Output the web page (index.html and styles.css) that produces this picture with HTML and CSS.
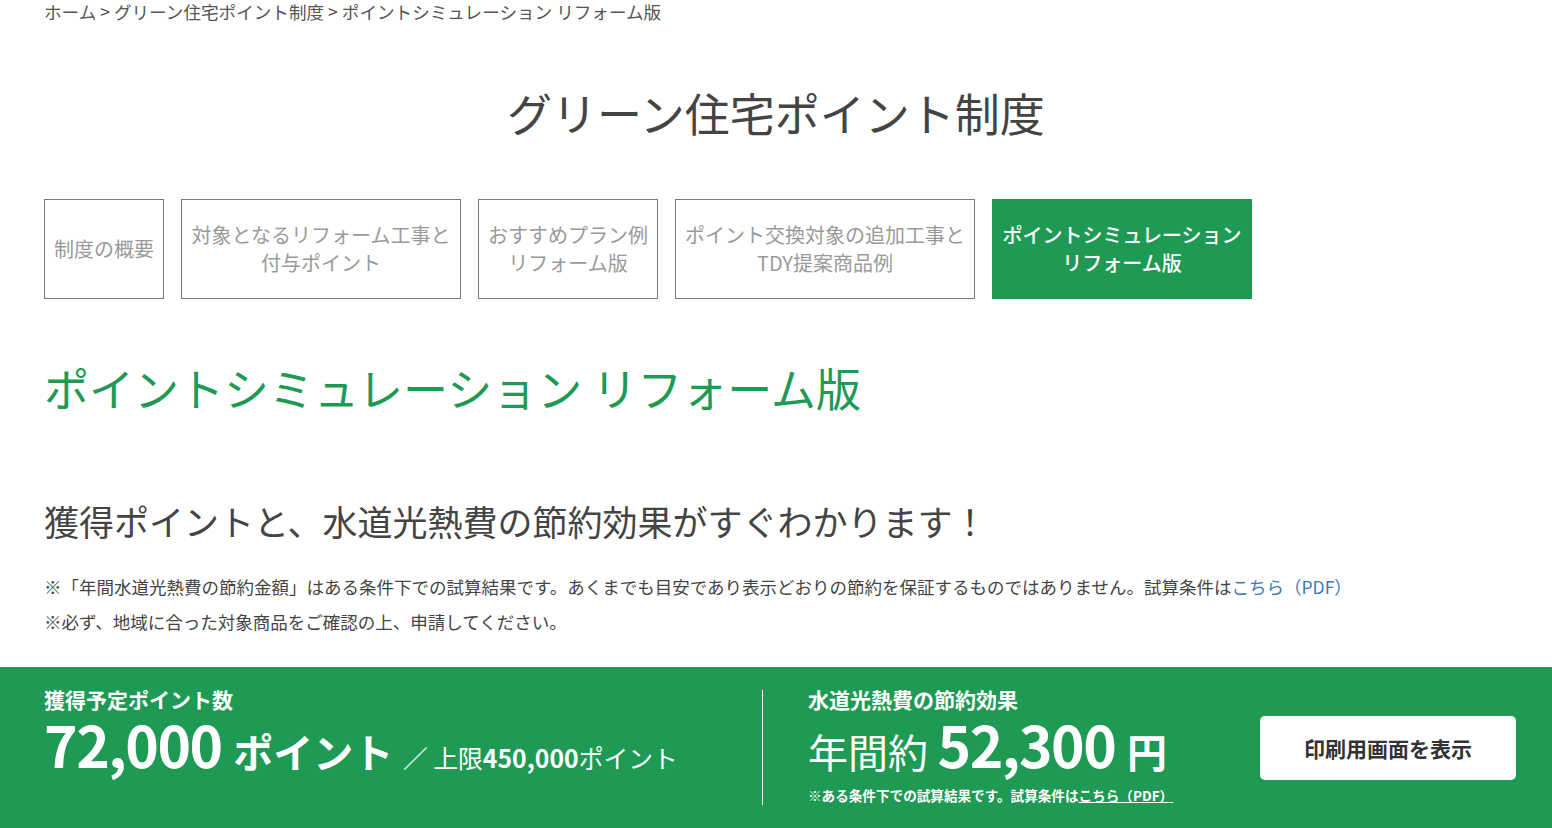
FILE: index.html
```html
<!DOCTYPE html>
<html lang="ja">
<head>
<meta charset="utf-8">
<title>ポイントシミュレーション リフォーム版</title>
<link rel="stylesheet" href="styles.css">
</head>
<body>
<div class="page">
  <nav class="breadcrumb">ホーム &gt; グリーン住宅ポイント制度 &gt; ポイントシミュレーション リフォーム版</nav>
  <h1 class="site-title">グリーン住宅ポイント制度</h1>
  <ul class="tabs">
    <li class="tab w1">制度の概要</li>
    <li class="tab w2">対象となるリフォーム工事と<br>付与ポイント</li>
    <li class="tab w3">おすすめプラン例<br>リフォーム版</li>
    <li class="tab w4">ポイント交換対象の追加工事と<br>TDY提案商品例</li>
    <li class="tab w5 active">ポイントシミュレーション<br>リフォーム版</li>
  </ul>
  <h2 class="page-title">ポイントシミュレーション リフォーム版</h2>
  <p class="lead">獲得ポイントと、水道光熱費の節約効果がすぐわかります！</p>
  <div class="notes">
    <p>※「年間水道光熱費の節約金額」はある条件下での試算結果です。あくまでも目安であり表示どおりの節約を保証するものではありません。試算条件は<a href="#" class="link">こちら（PDF）</a></p>
    <p>※必ず、地域に合った対象商品をご確認の上、申請してください。</p>
  </div>
</div>
<section class="result">
  <div class="result-points">
    <div class="result-label">獲得予定ポイント数</div>
    <div class="result-row">
      <span class="big-num">72,000</span>
      <span class="big-unit">ポイント</span>
      <span class="limit">／ 上限<b>450,000</b>ポイント</span>
    </div>
  </div>
  <div class="divider"></div>
  <div class="result-saving">
    <div class="saving-info">
      <div class="result-label">水道光熱費の節約効果</div>
      <div class="result-row">
        <span class="pre-unit">年間約</span>
        <span class="big-num">52,300</span>
        <span class="big-unit">円</span>
      </div>
      <div class="small-note">※ある条件下での試算結果です。試算条件は<a href="#" class="note-link">こちら（PDF）</a></div>
    </div>
    <button class="print-btn" type="button">印刷用画面を表示</button>
  </div>
</section>
</body>
</html>
```

FILE: styles.css
```css
* { box-sizing: border-box; }
html, body { margin: 0; padding: 0; }
body {
  font-family: "Noto Sans CJK JP", "Noto Sans", sans-serif;
  color: #444;
  background: #fff;
}
.page { padding: 0 44px; }
.breadcrumb {
  font-size: 17.6px;
  line-height: 24px;
  color: #555;
}
.site-title {
  margin: 57px 0 0;
  font-size: 45px;
  line-height: 63px;
  font-weight: 400;
  text-align: center;
  color: #444;
}
.tabs {
  list-style: none;
  margin: 55px 0 0;
  padding: 0;
  display: flex;
  gap: 17px;
}
.tab {
  height: 100px;
  border: 1px solid #7a7a7a;
  display: flex;
  align-items: center;
  justify-content: center;
  text-align: center;
  font-size: 20px;
  line-height: 28px;
  color: #9a9a9a;
}
.w1 { width: 120px; }
.w2 { width: 280px; }
.w3 { width: 180px; }
.w4 { width: 300px; }
.w5 { width: 260px; }
.tab.active {
  background: #1e9a54;
  border-color: #1e9a54;
  color: #fff;
  font-weight: 500;
}
.page-title {
  margin: 57px 0 0;
  font-size: 45px;
  line-height: 63px;
  font-weight: 400;
  color: #1e9a54;
}
.lead {
  margin: 77px 0 0;
  font-size: 35px;
  line-height: 50px;
  color: #444;
}
.notes { margin-top: 23px; }
.notes p {
  margin: 0;
  font-size: 17.5px;
  line-height: 35px;
  color: #444;
}
.link { color: #3b78bd; text-decoration: none; }
.result {
  margin-top: 28px;
  background: #1e9a54;
  color: #fff;
  display: flex;
  align-items: flex-start;
  padding: 17px 36px 0 44px;
  height: 180px;
}
.result-points { width: 718px; }
.divider {
  width: 1px;
  height: 115px;
  margin-top: 6px;
  background: #fff;
}
.result-saving {
  flex: 1;
  display: flex;
  align-items: flex-start;
  padding-left: 45px;
}
.result-label {
  font-size: 21px;
  line-height: 30px;
  font-weight: 700;
}
.result-row {
  height: 58px;
  line-height: 58px;
  white-space: nowrap;
}
.big-num {
  font-size: 57px;
  font-weight: 700;
  letter-spacing: -1.5px;
  margin-right: 8px;
}
.big-unit {
  font-size: 40px;
  font-weight: 700;
  margin-right: 6px;
}
.pre-unit {
  font-size: 40px;
  font-weight: 400;
  margin-right: 6px;
}
.limit { font-size: 24.8px; }
.limit b { font-weight: 700; }
.small-note {
  margin-top: 13px;
  font-size: 13.6px;
  line-height: 20px;
  font-weight: 700;
}
.note-link { color: #fff; text-decoration: underline; }
.print-btn {
  margin-left: auto;
  margin-top: 32px;
  width: 256px;
  height: 64px;
  border: none;
  border-radius: 5px;
  background: #fff;
  color: #333;
  font-family: "Noto Sans CJK JP", "Noto Sans", sans-serif;
  font-size: 21px;
  font-weight: 700;
  cursor: pointer;
}
```
